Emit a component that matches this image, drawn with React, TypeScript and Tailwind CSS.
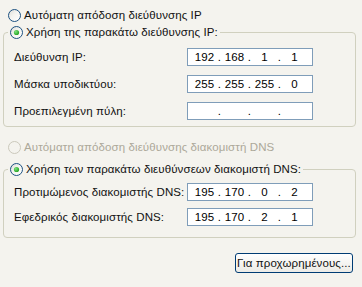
import React from 'react'

type RadioProps = { checked?: boolean; disabled?: boolean }

function Radio({ checked, disabled }: RadioProps) {
  return (
    <svg width="13" height="13" viewBox="0 0 13 13" className="shrink-0">
      <defs>
        <linearGradient id="rg" x1="0" y1="0" x2="1" y2="1">
          <stop offset="0" stopColor="#DCDCD7" />
          <stop offset="0.45" stopColor="#F4F4F0" />
          <stop offset="1" stopColor="#FFFFFF" />
        </linearGradient>
        <radialGradient id="dot" cx="0.35" cy="0.35" r="0.7">
          <stop offset="0" stopColor="#7BE37B" />
          <stop offset="1" stopColor="#21A121" />
        </radialGradient>
      </defs>
      <circle
        cx="6.5"
        cy="6.5"
        r="6"
        fill={disabled ? '#F4F3EE' : 'url(#rg)'}
        stroke={disabled ? '#CAC8BB' : '#1C5180'}
        strokeWidth="1"
      />
      {checked && <circle cx="6.5" cy="6.5" r="2.6" fill="url(#dot)" />}
    </svg>
  )
}

function IpBox({ parts }: { parts: string[] }) {
  return (
    <div className="flex h-[18px] w-[126px] items-center border border-[#7F9DB9] bg-white pl-[4px] text-black">
      {parts.map((p, i) => (
        <React.Fragment key={i}>
          <span className="w-[25px] text-center">{p}</span>
          {i < 3 && <span className="w-[5px] text-center">.</span>}
        </React.Fragment>
      ))}
    </div>
  )
}

function Row({ label, parts }: { label: string; parts: string[] }) {
  return (
    <div className="flex items-center justify-between pl-[10px] pr-[42px]">
      <span>{label}</span>
      <IpBox parts={parts} />
    </div>
  )
}

export default function App() {
  return (
    <div
      className="flex h-[287px] w-[362px] flex-col bg-[#F4F3EE] text-[11.5px] leading-[13px] tracking-[0.1px] text-[#111]"
      style={{ fontFamily: '"Liberation Sans", Arial, sans-serif' }}
    >
      <div className="flex items-center gap-[3px] pl-[8px] pt-[9px]">
        <Radio />
        <span>Αυτόματη απόδοση διεύθυνσης IP</span>
      </div>

      <fieldset className="mx-[3px] mt-[4px] h-[101px] w-[353px] rounded-[4px] border border-[#D0D0BF] pt-[9px]">
        <legend className="ml-[4px] flex items-center gap-[3px] px-[2px]">
          <Radio checked />
          <span>Χρήση της παρακάτω διεύθυνσης IP:</span>
        </legend>
        <div className="flex flex-col gap-[9px]">
          <Row label="Διεύθυνση IP:" parts={['192', '168', '1', '1']} />
          <Row label="Μάσκα υποδικτύου:" parts={['255', '255', '255', '0']} />
          <Row label="Προεπιλεγμένη πύλη:" parts={['', '', '', '']} />
        </div>
      </fieldset>

      <div className="flex items-center gap-[3px] pl-[8px] pt-[14px] text-[#ACA899]">
        <Radio disabled />
        <span>Αυτόματη απόδοση διεύθυνσης διακομιστή DNS</span>
      </div>

      <fieldset className="mx-[3px] mt-[9px] h-[75px] w-[353px] rounded-[4px] border border-[#D0D0BF] pt-[7px]">
        <legend className="ml-[4px] flex items-center gap-[3px] px-[2px]">
          <Radio checked />
          <span>Χρήση των παρακάτω διευθύνσεων διακομιστή DNS:</span>
        </legend>
        <div className="flex flex-col gap-[7px]">
          <Row label="Προτιμώμενος διακομιστής DNS:" parts={['195', '170', '0', '2']} />
          <Row label="Εφεδρικός διακομιστής DNS:" parts={['195', '170', '2', '1']} />
        </div>
      </fieldset>

      <div className="flex justify-end pr-[9px] pt-[15px]">
        <button className="h-[20px] w-[118px] rounded-[3px] border border-[#003C74] bg-gradient-to-b from-white to-[#ECEBE6] text-[11.5px] text-[#111]">
          Για προχωρημένους...
        </button>
      </div>
    </div>
  )
}
